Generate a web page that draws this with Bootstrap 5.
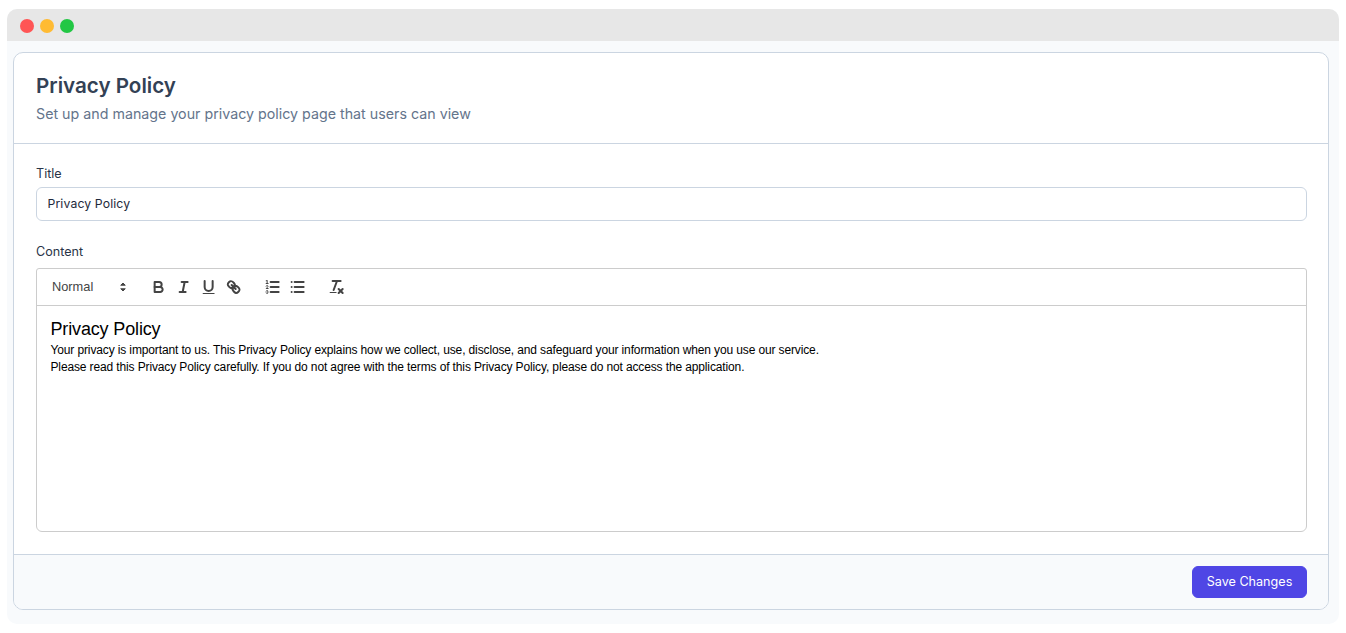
<!DOCTYPE html>
<html lang="en">
<head>
<meta charset="utf-8">
<title>Privacy Policy</title>
<link href="https://cdn.jsdelivr.net/npm/bootstrap@5.3.0/dist/css/bootstrap.min.css" rel="stylesheet">
<style>
html,body{height:100%}
body{background:#fff;font-family:Inter,sans-serif;padding:9px 7px;overflow:hidden}
.app-window{background:#f8fafc;border-radius:10px;height:615px;width:1332px;overflow:hidden}
.win-bar{height:32px;background:#e7e7e7;padding:2px 0 0 13px;gap:6px}
.dot{width:14px;height:14px;border-radius:50%;display:block}
.dot-r{background:#ff5555}.dot-y{background:#ffbb33}.dot-g{background:#22c744}
.win-body{padding:11px 10px 0 6px}
.pp-card{border:1px solid #cbd5e1;border-radius:10px;background:#fff;height:558px;overflow:hidden}
.pp-head{padding:18px 22px 0;height:91px;border-bottom:1px solid #cbd5e1}
.pp-title{font-size:20.6px;font-weight:600;color:#334155;line-height:30px;margin:0}
.pp-sub{font-size:14.26px;color:#64748b;line-height:20px;margin:3px 0 0}
.pp-main{padding:20px 21px 0 22px;height:411px}
.pp-label{font-size:12.6px;font-weight:400;color:#293548;line-height:20px;display:block;margin-bottom:3px}
.pp-label-gap{margin-bottom:6px}
.pp-input{border:1px solid #cbd5e1;border-radius:6px;font-size:12.25px;letter-spacing:.12px;height:34px;padding:0 10.5px;color:#1e293b;margin-bottom:21px}
.pp-input:focus{border-color:#cbd5e1;box-shadow:none}
.ql-box{border:1px solid #ccc;border-radius:3px 3px 6px 6px;height:264px;overflow:hidden}
.ql-bar{height:37px;border-bottom:1px solid #ccc;padding-left:15px;color:#444;font-family:"Liberation Sans",sans-serif}
.ql-pick{width:78px;font-size:12.8px;font-weight:500}
.ql-arrow{margin-right:-2px;color:#444}
.ql-ic{width:25.3px;height:18px;padding:0 3.65px;flex:none;display:block;margin:0;color:#444}
.ql-gap{width:13.4px;flex:none}
.ql-pick + .ql-gap{width:15.5px}
.ql-text{padding:12px 13.5px;font-family:"Liberation Sans",sans-serif;font-size:12px;letter-spacing:-.13px;line-height:17px;color:#000}
.ql-text h2{font-size:18px;letter-spacing:-.15px;font-weight:400;line-height:22px;margin:0 0 2px;font-family:inherit}
.ql-text p{margin:0}
.pp-foot{height:55px;background:#f8fafc;border-top:1px solid #cbd5e1;padding:11px 21px 0 0}
.pp-btn{background:#4f46e5;border:1px solid #4f46e5;color:#fff;font-size:12.6px;font-weight:400;height:32px;width:115px;border-radius:6px;padding:0;line-height:1}
.pp-btn:hover{background:#4338ca;color:#fff}
.ql-ic .s,.ql-ic .t,.ql-arrow .s{fill:none;stroke:currentColor;stroke-width:2;stroke-linecap:round;stroke-linejoin:round}
.ql-ic .t{stroke-width:1}
.ql-ic .f,.ql-arrow .f{fill:currentColor}
.ql-arrow .s{stroke-width:1;fill:currentColor}
</style>
</head>
<body>
<div class="app-window">
  <div class="win-bar d-flex align-items-center">
    <span class="dot dot-r"></span><span class="dot dot-y"></span><span class="dot dot-g"></span>
  </div>
  <div class="win-body">
    <div class="pp-card d-flex flex-column">
      <div class="pp-head">
        <h1 class="pp-title">Privacy Policy</h1>
        <p class="pp-sub">Set up and manage your privacy policy page that users can view</p>
      </div>
      <div class="pp-main">
        <label class="pp-label" for="ttl">Title</label>
        <input id="ttl" class="form-control pp-input" value="Privacy Policy">
        <label class="pp-label pp-label-gap">Content</label>
        <div class="ql-box">
          <div class="ql-bar d-flex align-items-center">
            <div class="ql-pick d-flex align-items-center justify-content-between">
              <span>Normal</span>
              <svg class="ql-arrow" width="18" height="18" viewBox="0 0 18 18"><polygon class="s" points="7 11 9 13 11 11"/><polygon class="s" points="7 7 9 5 11 7"/></svg>
            </div>
            <span class="ql-gap"></span>
            <svg class="ql-ic" viewBox="0 0 18 18"><path class="s" d="M5,4H9.5A2.5,2.5,0,0,1,12,6.5v0A2.5,2.5,0,0,1,9.5,9H5A0,0,0,0,1,5,9V4A0,0,0,0,1,5,4Z"/><path class="s" d="M5,9h5.5A2.5,2.5,0,0,1,13,11.5v0A2.5,2.5,0,0,1,10.5,14H5a0,0,0,0,1,0,0V9A0,0,0,0,1,5,9Z"/></svg>
            <svg class="ql-ic" viewBox="0 0 18 18"><line class="s" x1="7" x2="13" y1="4" y2="4"/><line class="s" x1="5" x2="11" y1="14" y2="14"/><line class="s" x1="8" x2="10" y1="14" y2="4"/></svg>
            <svg class="ql-ic" viewBox="0 0 18 18"><path class="s" d="M5,3V9a4.012,4.012,0,0,0,4,4H9a4.012,4.012,0,0,0,4-4V3"/><rect class="f" height="1" rx="0.5" ry="0.5" width="12" x="3" y="15"/></svg>
            <svg class="ql-ic" viewBox="0 0 18 18"><line class="s" x1="7" x2="11" y1="7" y2="11"/><path class="s" d="M8.9,4.577a3.476,3.476,0,0,1,.36,4.679A3.476,3.476,0,0,1,4.577,8.9C3.185,7.5,2.035,6.4,4.217,4.217S7.5,3.185,8.9,4.577Z"/><path class="s" d="M13.423,9.1a3.476,3.476,0,0,0-4.679-.36,3.476,3.476,0,0,0,.36,4.679c1.392,1.392,2.5,2.542,4.679.36S14.815,10.5,13.423,9.1Z"/></svg>
            <span class="ql-gap"></span>
            <svg class="ql-ic" viewBox="0 0 18 18"><line class="s" x1="7" x2="15" y1="4" y2="4"/><line class="s" x1="7" x2="15" y1="9" y2="9"/><line class="s" x1="7" x2="15" y1="14" y2="14"/><line class="t" x1="2.5" x2="4.5" y1="5.5" y2="5.5"/><path class="f" d="M3.5,6A0.5,0.5,0,0,1,3,5.5V3.085l-0.276.138A0.5,0.5,0,0,1,2.053,3c-0.124-.247-0.023-0.324.224-0.447l1-.5A0.5,0.5,0,0,1,4,2.5v3A0.5,0.5,0,0,1,3.5,6Z"/><path class="t" d="M4.5,10.5h-2c0-.234,1.85-1.076,1.85-2.234A0.959,0.959,0,0,0,2.5,8.156"/><path class="t" d="M2.5,14.846a0.959,0.959,0,0,0,1.85-.109A0.7,0.7,0,0,0,3.75,14a0.688,0.688,0,0,0,.6-0.736,0.959,0.959,0,0,0-1.85-.109"/></svg>
            <svg class="ql-ic" viewBox="0 0 18 18"><line class="s" x1="6" x2="15" y1="4" y2="4"/><line class="s" x1="6" x2="15" y1="9" y2="9"/><line class="s" x1="6" x2="15" y1="14" y2="14"/><line class="s" x1="3" x2="3" y1="4" y2="4"/><line class="s" x1="3" x2="3" y1="9" y2="9"/><line class="s" x1="3" x2="3" y1="14" y2="14"/></svg>
            <span class="ql-gap"></span>
            <svg class="ql-ic" viewBox="0 0 18 18"><line class="s" x1="5" x2="13" y1="3" y2="3"/><line class="s" x1="6" x2="9.35" y1="12" y2="3"/><line class="s" x1="11" x2="15" y1="11" y2="15"/><line class="s" x1="15" x2="11" y1="11" y2="15"/><rect class="f" height="1" rx="0.5" ry="0.5" width="7" x="2" y="14"/></svg>
          </div>
          <div class="ql-text">
            <h2>Privacy Policy</h2>
            <p>Your privacy is important to us. This Privacy Policy explains how we collect, use, disclose, and safeguard your information when you use our service.</p>
            <p>Please read this Privacy Policy carefully. If you do not agree with the terms of this Privacy Policy, please do not access the application.</p>
          </div>
        </div>
      </div>
      <div class="pp-foot d-flex justify-content-end align-items-start">
        <button type="button" class="btn pp-btn">Save Changes</button>
      </div>
    </div>
  </div>
</div>
<script src="https://cdn.jsdelivr.net/npm/bootstrap@5.3.0/dist/js/bootstrap.bundle.min.js"></script>
</body>
</html>
